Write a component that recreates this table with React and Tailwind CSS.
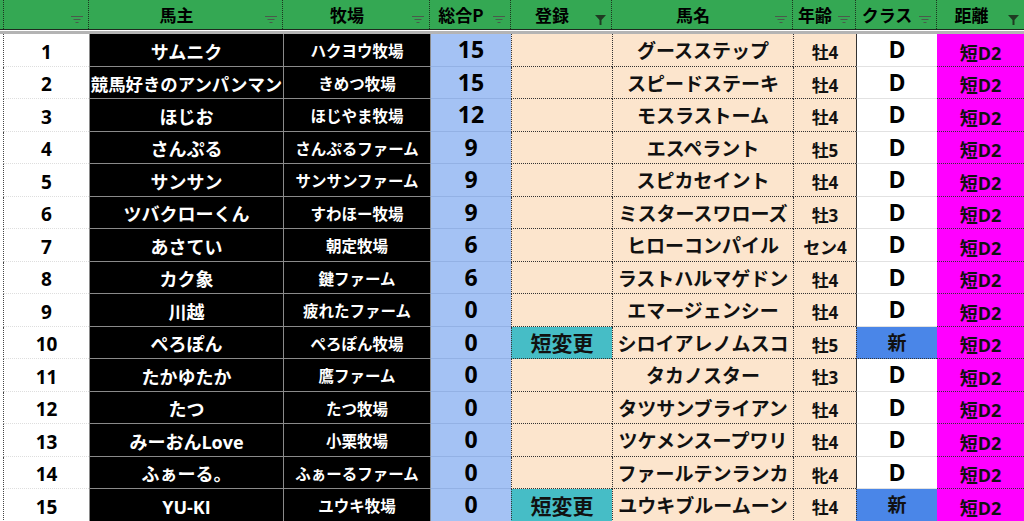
const HORSES = [
  { no: 1, owner: 'サムニク', farm: 'ハクヨウ牧場', pt: 15, reg: '', name: 'グースステップ', age: '牡4', cls: 'D' },
  { no: 2, owner: '競馬好きのアンパンマン', farm: 'きめつ牧場', pt: 15, reg: '', name: 'スピードステーキ', age: '牡4', cls: 'D' },
  { no: 3, owner: 'ほじお', farm: 'ほじやま牧場', pt: 12, reg: '', name: 'モスラストーム', age: '牡4', cls: 'D' },
  { no: 4, owner: 'さんぷる', farm: 'さんぷるファーム', pt: 9, reg: '', name: 'エスペラント', age: '牡5', cls: 'D' },
  { no: 5, owner: 'サンサン', farm: 'サンサンファーム', pt: 9, reg: '', name: 'スピカセイント', age: '牡4', cls: 'D' },
  { no: 6, owner: 'ツバクローくん', farm: 'すわほー牧場', pt: 9, reg: '', name: 'ミスタースワローズ', age: '牡3', cls: 'D' },
  { no: 7, owner: 'あさてい', farm: '朝定牧場', pt: 6, reg: '', name: 'ヒローコンパイル', age: 'セン4', cls: 'D' },
  { no: 8, owner: 'カク象', farm: '鍵ファーム', pt: 6, reg: '', name: 'ラストハルマゲドン', age: '牡4', cls: 'D' },
  { no: 9, owner: '川越', farm: '疲れたファーム', pt: 0, reg: '', name: 'エマージェンシー', age: '牡4', cls: 'D' },
  { no: 10, owner: 'ぺろぽん', farm: 'ぺろぽん牧場', pt: 0, reg: '短変更', name: 'シロイアレノムスコ', age: '牡5', cls: '新' },
  { no: 11, owner: 'たかゆたか', farm: '鷹ファーム', pt: 0, reg: '', name: 'タカノスター', age: '牡3', cls: 'D' },
  { no: 12, owner: 'たつ', farm: 'たつ牧場', pt: 0, reg: '', name: 'タツサンブライアン', age: '牡4', cls: 'D' },
  { no: 13, owner: 'みーおんLove', farm: '小栗牧場', pt: 0, reg: '', name: 'ツケメンスープワリ', age: '牡4', cls: 'D' },
  { no: 14, owner: 'ふぁーる。', farm: 'ふぁーるファーム', pt: 0, reg: '', name: 'ファールテンランカ', age: '牝4', cls: 'D' },
  { no: 15, owner: 'YU-KI', farm: 'ユウキ牧場', pt: 0, reg: '短変更', name: 'ユウキブルームーン', age: '牡4', cls: '新' },
]

function FilterIcon({ active }) {
  if (active) {
    return (
      <svg className="absolute right-[5px] top-[15px] w-[11px] h-[10px]" viewBox="0 0 11 10">
        <path d="M0 0h11L6.5 5v5h-2V5z" fill="#1f3b22" />
      </svg>
    )
  }
  return (
    <svg className="absolute right-[5px] top-[16px] w-[12px] h-[7px]" viewBox="0 0 12 7">
      <path d="M0 0.5h12M2.5 3.5h7M4.5 6.5h3" stroke="#4a5a4c" strokeWidth="1" />
    </svg>
  )
}

function HeaderCell({ w, label, active, first }) {
  return (
    <div
      className={`relative h-full flex items-center justify-center pr-[18px] border-r border-dotted border-[#1d3520] ${w} ${
        first ? 'ml-[3px] border-l' : ''
      }`}
    >
      <span className="text-[17px] font-bold text-black leading-none">{label}</span>
      <FilterIcon active={active} />
    </div>
  )
}

function Row({ h }) {
  const isNew = h.cls === '新'
  return (
    <div className="flex h-[32.5px] font-bold leading-none">
      {/* No. */}
      <div className="w-[86px] ml-[3px] pt-[5px] flex items-center justify-center bg-white border-l border-dotted border-l-[#444] border-b border-b-[#dedede] text-[19px] text-black">
        {h.no}
      </div>
      {/* Owner / farm */}
      <div
        className={`w-[194px] pt-[4px] flex items-center justify-center bg-black border-l border-b border-[#8a8a8a] text-white whitespace-nowrap ${
          h.owner.length > 9 ? 'text-[17.4px]' : 'text-[18px]'
        }`}
      >
        {h.owner}
      </div>
      <div className="w-[147px] pt-[4px] flex items-center justify-center bg-black border-l border-b border-[#8a8a8a] text-white text-[15.5px] whitespace-nowrap">
        {h.farm}
      </div>
      {/* Points */}
      <div className="w-[81px] flex items-center justify-center bg-[#a4c2f4] border-l border-l-[#8a8a8a] border-b border-b-[#93b1e4] text-[23px] text-black">
        {h.pt}
      </div>
      {/* Registration */}
      <div
        className={`w-[101px] pt-[3px] flex items-center justify-center border-l border-b border-dotted border-[#333] text-[21px] text-[#111] ${
          h.reg ? 'bg-[#46bdc6]' : 'bg-[#fce5cd]'
        }`}
      >
        {h.reg}
      </div>
      {/* Horse name */}
      <div className="w-[181px] pt-[4px] flex items-center justify-center bg-[#fce5cd] border-l border-b border-dotted border-[#333] text-[19px] text-[#111] whitespace-nowrap">
        {h.name}
      </div>
      <div className="w-[63px] pt-[6px] flex items-center justify-center bg-[#fce5cd] border-l border-b border-dotted border-[#333] text-[17px] text-[#111] whitespace-nowrap">
        {h.age}
      </div>
      {/* Class */}
      <div
        className={`w-[81px] flex items-center justify-center border-l border-dotted border-l-[#333] ${
          isNew
            ? 'bg-[#4a86e8] border-b border-b-[#333] text-[19px] text-[#111] pt-[2px]'
            : 'bg-white border-b border-solid border-b-[#e2e2e2] text-[23px] text-black'
        }`}
      >
        {h.cls}
      </div>
      {/* Distance */}
      <div className="flex-1 pt-[6px] flex items-center justify-center bg-[#ff00ff] border-b border-dotted border-[#333] text-[18px] text-[#111]">
        短D2
      </div>
    </div>
  )
}

export default function App() {
  return (
    <div className="w-[1024px] h-[521px] overflow-hidden bg-white font-['Open_Sans','Noto_Sans_CJK_JP',sans-serif]">
      {/* Header */}
      <div className="flex h-[30px] bg-[#34a853] border-b border-[#1e2a1f] font-['Noto_Sans_CJK_JP',sans-serif]">
        <HeaderCell w="w-[86px]" label="" first />
        <HeaderCell w="w-[194px]" label="馬主" />
        <HeaderCell w="w-[147px]" label="牧場" />
        <HeaderCell w="w-[81px]" label="総合P" />
        <HeaderCell w="w-[101px]" label="登録" active />
        <HeaderCell w="w-[181px]" label="馬名" />
        <HeaderCell w="w-[63px]" label="年齢" />
        <HeaderCell w="w-[81px]" label="クラス" />
        <div className="relative flex-1 h-full flex items-center justify-center pr-[18px]">
          <span className="text-[17px] font-bold text-black leading-none">距離</span>
          <FilterIcon active />
        </div>
      </div>
      <div className="h-[1px] bg-white" />
      <div className="h-[3px] bg-[#b4b4b4]" />

      {/* Rows */}
      <div>
        {HORSES.map((h) => (
          <Row key={h.no} h={h} />
        ))}
      </div>
    </div>
  )
}
